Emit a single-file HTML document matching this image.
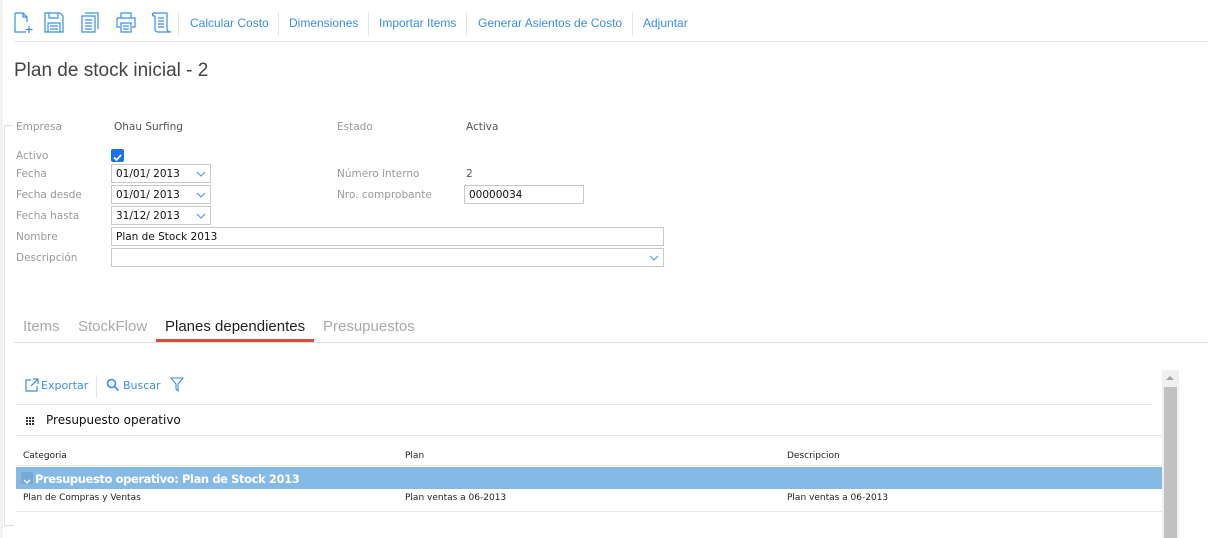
<!DOCTYPE html>
<html><head><meta charset="utf-8"><style>
*{margin:0;padding:0;box-sizing:border-box}
body{width:1208px;height:538px;position:relative;background:#fff;overflow:hidden;font-family:"DejaVu Sans",Verdana,sans-serif;}
.a{position:absolute;white-space:nowrap}
.tb{font-family:"Liberation Sans",Arial,sans-serif;font-size:12px;color:#3a8ee6;top:16px}
.sep{position:absolute;top:12px;width:1px;height:24px;background:#e3e3e3}
.lbl{font-size:10.5px;color:#999}
.val{font-size:10.5px;color:#555}
.inp{position:absolute;border:1px solid #c8c8c8;height:19px;font-size:10.5px;color:#111;padding:3px 4px 0;background:#fff}
.chev{position:absolute;right:4px;top:5px}
.tab{font-family:"Liberation Sans",Arial,sans-serif;font-size:15px;color:#aaa;top:318px}
.sm{font-size:9px;color:#222}
</style></head><body>
<div class="a" style="left:0;top:0;width:3px;height:538px;background:#f2f2f2"></div>
<svg class="a" style="left:14px;top:12px" width="22" height="22" viewBox="0 0 22 22" fill="none" stroke="#3a8ee6" stroke-width="1.2"><path d="M1 1h8l4 4v5M1 1v19h11M9 1v4h4M15 14v7M11.5 17.5h7"/></svg>
<svg class="a" style="left:44px;top:12px" width="20" height="21" viewBox="0 0 20 21" fill="none" stroke="#3a8ee6" stroke-width="1.2"><path d="M1 1h15l3 3v16H1z M5 1v5h9V1 M4 11h12v9H4z M6 14h8M6 17h8"/></svg>
<svg class="a" style="left:81px;top:12px" width="18" height="21" viewBox="0 0 18 21" fill="none" stroke="#3a8ee6" stroke-width="1.2"><path d="M4 1h13v16 M1 4h13v16H1z M4 8h7M4 11h7M4 14h7M4 17h7"/></svg>
<svg class="a" style="left:116px;top:12px" width="20" height="21" viewBox="0 0 20 21" fill="none" stroke="#3a8ee6" stroke-width="1.2"><path d="M5 6V1h10v5 M1 6h18v9h-3 M4 15H1V6 M5 11h10v9H5z M7 14h6M7 17h6"/></svg>
<svg class="a" style="left:151px;top:12px" width="22" height="22" viewBox="0 0 22 22" fill="none" stroke="#3a8ee6" stroke-width="1.2"><path d="M3 1h13v16c0 2 2 3 4 3H7c-2 0-3-1-3-3V4 M3 1c-2 0-2 3 0 3h1 M7 6h6M7 9h6M7 12h6M7 15h6"/></svg>
<div class="sep" style="left:178px"></div>
<div class="a tb" style="left:190px">Calcular Costo</div>
<div class="sep" style="left:278px"></div>
<div class="a tb" style="left:289px">Dimensiones</div>
<div class="sep" style="left:368px"></div>
<div class="a tb" style="left:379px">Importar Items</div>
<div class="sep" style="left:466px"></div>
<div class="a tb" style="left:478px">Generar Asientos de Costo</div>
<div class="sep" style="left:632px"></div>
<div class="a tb" style="left:643px">Adjuntar</div>
<div class="a" style="left:14px;top:41px;width:1194px;height:1px;background:#e6e6e6"></div>
<div class="a" style="left:14px;top:60px;font-family:'Liberation Sans',Arial,sans-serif;font-size:19px;color:#444">Plan de stock inicial - 2</div>
<div class="a" style="left:4px;top:125px;width:1px;height:400px;background:#ddd"></div>
<div class="a" style="left:4px;top:125px;width:9px;height:1px;background:#ddd"></div>
<div class="a" style="left:4px;top:525px;width:10px;height:1px;background:#ddd"></div>
<div class="a lbl" style="left:16px;top:121px">Empresa</div>
<div class="a val" style="left:114px;top:121px">Ohau Surfing</div>
<div class="a lbl" style="left:337px;top:121px">Estado</div>
<div class="a val" style="left:466px;top:121px">Activa</div>
<div class="a lbl" style="left:16px;top:150px">Activo</div>
<div class="a" style="left:111px;top:149px;width:13px;height:13px;background:#1a73e8;border-radius:2px"><svg width="13" height="13"><path d="M3 6.5l2.5 2.5 4.5-5" stroke="#fff" stroke-width="1.8" fill="none"/></svg></div>
<div class="a lbl" style="left:16px;top:168px">Fecha</div>
<div class="inp" style="left:111px;top:164px;width:100px">01/01/ 2013<svg class="chev" width="10" height="8"><path d="M1 2l4 4 4-4" stroke="#4a90e2" fill="none"/></svg></div>
<div class="a lbl" style="left:16px;top:189px">Fecha desde</div>
<div class="inp" style="left:111px;top:185px;width:100px">01/01/ 2013<svg class="chev" width="10" height="8"><path d="M1 2l4 4 4-4" stroke="#4a90e2" fill="none"/></svg></div>
<div class="a lbl" style="left:16px;top:210px">Fecha hasta</div>
<div class="inp" style="left:111px;top:206px;width:100px">31/12/ 2013<svg class="chev" width="10" height="8"><path d="M1 2l4 4 4-4" stroke="#4a90e2" fill="none"/></svg></div>
<div class="a lbl" style="left:337px;top:168px">Número interno</div>
<div class="a val" style="left:466px;top:168px">2</div>
<div class="a lbl" style="left:337px;top:189px">Nro. comprobante</div>
<div class="inp" style="left:464px;top:185px;width:120px">00000034</div>
<div class="a lbl" style="left:16px;top:231px">Nombre</div>
<div class="inp" style="left:111px;top:227px;width:553px">Plan de Stock 2013</div>
<div class="a lbl" style="left:16px;top:252px">Descripción</div>
<div class="inp" style="left:111px;top:248px;width:553px"><svg class="chev" width="10" height="8"><path d="M1 2l4 4 4-4" stroke="#4a90e2" fill="none"/></svg></div>
<div class="a tab" style="left:23px">Items</div>
<div class="a tab" style="left:78px">StockFlow</div>
<div class="a tab" style="left:165px;color:#222">Planes dependientes</div>
<div class="a tab" style="left:323px">Presupuestos</div>
<div class="a" style="left:156px;top:339px;width:158px;height:3px;background:#dd4b39"></div>
<div class="a" style="left:14px;top:342px;width:1194px;height:1px;background:#ddd"></div>
<svg class="a" style="left:25px;top:378px" width="15" height="14" fill="none" stroke="#3a8ee6" stroke-width="1.2"><path d="M6 2H1v11h11V8 M8 1h5v5 M13 1L6 8"/></svg>
<div class="a" style="left:41px;top:379px;font-size:11px;color:#3a8ee6">Exportar</div>
<div class="a" style="left:96px;top:375px;width:1px;height:23px;background:#e6e6e6"></div>
<svg class="a" style="left:106px;top:378px" width="14" height="14" fill="none" stroke="#3a8ee6" stroke-width="1.6"><circle cx="5.5" cy="5.5" r="4"/><path d="M8.5 8.5l4 4"/></svg>
<div class="a" style="left:123px;top:379px;font-size:11px;color:#3a8ee6">Buscar</div>
<svg class="a" style="left:170px;top:377px" width="14" height="15" fill="none" stroke="#3a8ee6" stroke-width="1.1"><path d="M1 1h12L8 7v7L6 12V7z"/></svg>
<div class="a" style="left:16px;top:404px;width:1136px;height:1px;background:#e6e6e6"></div>
<svg class="a" style="left:26px;top:417px" width="8" height="8" fill="#333"><rect x="0" y="0" width="2" height="2"/><rect x="3" y="0" width="2" height="2"/><rect x="6" y="0" width="2" height="2"/><rect x="0" y="3" width="2" height="2"/><rect x="3" y="3" width="2" height="2"/><rect x="6" y="3" width="2" height="2"/><rect x="0" y="6" width="2" height="2"/><rect x="3" y="6" width="2" height="2"/><rect x="6" y="6" width="2" height="2"/></svg>
<div class="a" style="left:46px;top:413px;font-size:12px;color:#111">Presupuesto operativo</div>
<div class="a" style="left:16px;top:435px;width:1146px;height:1px;background:#e6e6e6"></div>
<div class="a sm" style="left:23px;top:451px">Categoria</div>
<div class="a sm" style="left:405px;top:451px">Plan</div>
<div class="a sm" style="left:787px;top:451px">Descripcion</div>
<div class="a" style="left:16px;top:465px;width:1146px;height:1px;background:#e6e6e6"></div>
<div class="a" style="left:16px;top:467px;width:1146px;height:22px;background:#85b9e6"></div>
<div class="a" style="left:21px;top:472px;width:12px;height:12px;background:#78a9d6;border-radius:2px"><svg width="12" height="12"><path d="M3 5l3 3 3-3" stroke="#fff" stroke-width="1.3" fill="none"/></svg></div>
<div class="a" style="left:35px;top:472px;font-size:11.5px;font-weight:bold;color:#fff;letter-spacing:-0.4px">Presupuesto operativo: Plan de Stock 2013</div>
<div class="a sm" style="left:23px;top:493px">Plan de Compras y Ventas</div>
<div class="a sm" style="left:405px;top:493px">Plan ventas a 06-2013</div>
<div class="a sm" style="left:787px;top:493px">Plan ventas a 06-2013</div>
<div class="a" style="left:16px;top:511px;width:1146px;height:1px;background:#e6e6e6"></div>
<div class="a" style="left:1162px;top:370px;width:17px;height:168px;background:#f0f0f0"></div>
<div class="a" style="left:1164px;top:387px;width:13px;height:151px;background:#c1c1c1"></div>
<svg class="a" style="left:1166px;top:375px" width="8" height="5"><path d="M0 5L4 1L8 5z" fill="#a3a3a3"/></svg>
</body></html>
